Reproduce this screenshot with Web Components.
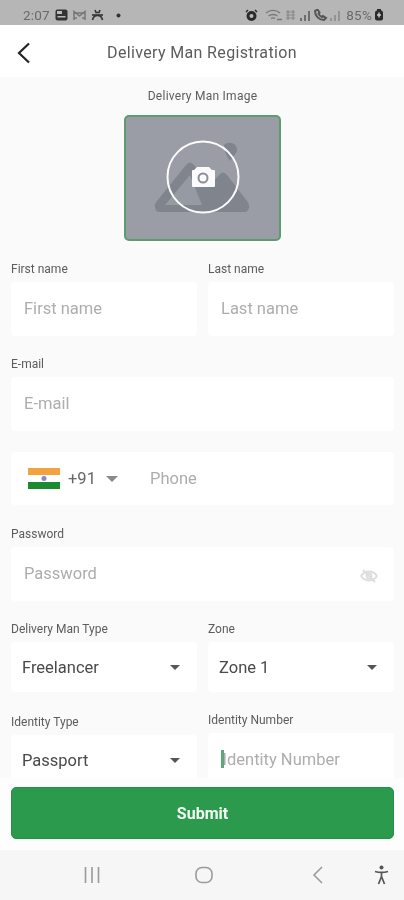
<!DOCTYPE html>
<html>
<head>
<meta charset="utf-8">
<title>Delivery Man Registration</title>
<style>
html, body { margin: 0; height: 900px; overflow: hidden; background: #fafafa; }
body { font-family: Roboto, "Liberation Sans", sans-serif; }
</style>
</head>
<body>
<reg-page>
  <status-bar></status-bar>
  <app-bar>Delivery Man Registration</app-bar>
  <reg-form>
    <photo-picker>Delivery Man Image</photo-picker>
    <form-row style="margin-top:21px">
      <form-field label="First name" hint="First name"></form-field>
      <form-field label="Last name" hint="Last name"></form-field>
    </form-row>
    <form-field label="E-mail" hint="E-mail" style="margin-top:21px"></form-field>
    <phone-field style="margin-top:21px"></phone-field>
    <form-field label="Password" hint="Password" eye style="margin-top:22px"></form-field>
    <form-row style="margin-top:21px">
      <form-field label="Delivery Man Type" value="Freelancer" select></form-field>
      <form-field label="Zone" value="Zone 1" select></form-field>
    </form-row>
    <form-row style="margin-top:21px">
      <form-field label="Identity Type" value="Passport" select style="margin-top:2px"></form-field>
      <form-field label="Identity Number" hint="Identity Number" caret></form-field>
    </form-row>
  </reg-form>
  <submit-bar>Submit</submit-bar>
  <nav-bar></nav-bar>
</reg-page>
<script>
class RegPage extends HTMLElement {
  constructor() {
    super()
    this.attachShadow({ mode: 'open' }).innerHTML = `
      <style>
      :host { display: flex; flex-direction: column; height: 900px; width: 404px; filter: blur(.6px); }
      </style>
      <slot></slot>`
  }
}

class StatusBar extends HTMLElement {
  constructor() {
    super()
    this.attachShadow({ mode: 'open' }).innerHTML = `
      <style>
      :host { display: flex; align-items: center; height: 25px; flex: none; padding: 5px 20px 0 23px; box-sizing: border-box;
        background: #b6b6b6; color: #6a6a6a; font-size: 13.500px; letter-spacing: .2px; }
      .left, .right { display: flex; align-items: center; }
      .left { gap: 5px; }
      .right { margin-left: auto; gap: 2px; }
      svg { display: block; }
      .pct { margin-left: 3px; }
      </style>
      <div class="left">
        <span>2:07</span>
        <svg width="13" height="12" viewBox="0 0 13 12"><rect x=".5" y=".5" width="12" height="11" rx="2" fill="#333"/><rect x="2" y="2" width="5" height="3" fill="#bbb"/><rect x="2.500" y="7" width="8" height="1.500" fill="#bbb"/></svg>
        <svg width="13" height="11" viewBox="0 0 13 11" fill="none" stroke="#777" stroke-width="1.500"><path d="M1 10V1.500L6.500 6 12 1.500V10"/><path d="M1 3h11M1 8h3M9 8h3"/></svg>
        <svg width="13" height="12" viewBox="0 0 13 12" fill="none" stroke="#333" stroke-width="1.600"><path d="M4 1l1 2.500h3L9 1"/><path d="M1 6h11"/><path d="M1.500 11c.5-3 2.500-4.500 5-4.500s4.500 1.500 5 4.500"/></svg>
        <svg width="5" height="5" viewBox="0 0 5 5" style="margin-left:7px"><circle cx="2.500" cy="2.500" r="2" fill="#333"/></svg>
      </div>
      <div class="right">
        <svg width="13" height="13" viewBox="0 0 13 13" style="margin-right:5px"><circle cx="6.500" cy="7" r="5" fill="#2b2b2b"/><path d="M1 3l2-2M12 3l-2-2" stroke="#2b2b2b" stroke-width="1.500"/><circle cx="6.500" cy="7" r="2" fill="#bbb"/></svg>
        <svg width="18" height="13" viewBox="0 0 18 13" fill="none" stroke="#777" stroke-width="1.300"><path d="M1 4c4-3.500 10-3.500 14 0M3.500 7c2.500-2 6.500-2 9 0M6 9.500c1.500-1 2.500-1 4 0"/><path d="M12 10.500h5" stroke-width="1.500"/></svg>
        <svg width="26" height="13" viewBox="0 0 26 13" fill="none" stroke="#888" stroke-width="1.200"><path d="M1 3h9M1 6h9M1 9h9M3 1v10M8 1v10"/><path d="M16 12V9M20 12V6M24 12V2" stroke="#666" stroke-width="1.800"/></svg>
        <svg width="15" height="13" viewBox="0 0 15 13" fill="none" stroke="#555" stroke-width="2"><path d="M2 2c0 5 4 9 9 9l2-2-3-2-1 1c-1.500-.5-3-2-3.500-3.500l1-1-2-3z"/></svg>
        <svg width="11" height="13" viewBox="0 0 11 13" fill="none" stroke="#888" stroke-width="1.500"><path d="M1 12V9M5 12V6M9 12V2"/></svg>
        <span class="pct">85%</span>
        <svg width="10" height="12" viewBox="0 0 10 12"><rect x="1" y="1.500" width="8" height="10" rx="2" fill="#2b2b2b"/><rect x="3" y="0" width="4" height="2" fill="#2b2b2b"/><path d="M5 3.500v5M3 6h4" stroke="#ccc" stroke-width="1.400"/></svg>
      </div>`
  }
}

class AppBar extends HTMLElement {
  constructor() {
    super()
    this.attachShadow({ mode: 'open' }).innerHTML = `
      <style>
      :host { display: flex; align-items: center; justify-content: center; position: relative; height: 52px; padding-top: 2px; box-sizing: border-box; flex: none;
        background: #fff; color: #5c5c5c; font-size: 16px; letter-spacing: .35px; }
      svg { position: absolute; left: 16px; top: 17px; }
      </style>
      <svg width="15" height="22" viewBox="0 0 15 22" fill="none" stroke="#222" stroke-width="2.200"><path d="M13 1.500L3 11l10 9.500"/></svg>
      <span><slot></slot></span>`
  }
}

class RegForm extends HTMLElement {
  constructor() {
    super()
    this.attachShadow({ mode: 'open' }).innerHTML = `
      <style>
      :host { display: flex; flex-direction: column; flex: 1; min-height: 0; overflow: hidden; padding: 0 10px 0 11px; background: #fafafa; }
      </style>
      <slot></slot>`
  }
}

class PhotoPicker extends HTMLElement {
  constructor() {
    super()
    this.attachShadow({ mode: 'open' }).innerHTML = `
      <style>
      :host { display: flex; flex-direction: column; align-items: center; flex: none; padding-top: 12px; }
      .label { font-size: 12px; line-height: 14px; color: #5c5c5c; letter-spacing: .25px; margin-bottom: 12px; }
      .box { position: relative; width: 157px; height: 126px; box-sizing: border-box; border: 2px solid #5c9c70; border-radius: 5px; background: #9a9da5; }
      svg { position: absolute; left: -2px; top: -2px; }
      </style>
      <div class="label"><slot></slot></div>
      <div class="box">
        <svg width="157" height="126" viewBox="0 0 157 126">
          <path d="M31 92 Q30 89 33 86 L62 50 Q66 45 70 50 L86 70 L95 60 Q99 55 103 60 L123 86 Q128 93 122 97 L36 97 Q31 97 31 92z" fill="#80848d"/>
          <path d="M41 90 L66 60 L78 90z" fill="#969aa2"/>
          <path d="M100 30 Q104 26 110 29 Q115 33 112 38 L106 46 Q100 38 100 30z" fill="#80848d"/>
          <circle cx="79" cy="62" r="35.500" fill="none" stroke="#fbfbfb" stroke-width="2"/>
          <path d="M70 55 L73 52 H85 L88 55 H90 Q91 55 91 56 V71 Q91 72 90 72 H69 Q68 72 68 71 V56 Q68 55 69 55z" fill="#fbfbfb"/>
          <circle cx="79" cy="63" r="5.500" fill="#8b8e96"/>
          <circle cx="79" cy="63" r="3.500" fill="#fbfbfb"/>
        </svg>
      </div>`
  }
}

class FormRow extends HTMLElement {
  constructor() {
    super()
    this.attachShadow({ mode: 'open' }).innerHTML = `
      <style>
      :host { display: grid; grid-template-columns: 186px 186px; gap: 11px; flex: none; }
      </style>
      <slot></slot>`
  }
}

class FormField extends HTMLElement {
  constructor() {
    super()
    const isSelect = this.hasAttribute('select')
    const text = isSelect ? this.getAttribute('value') : this.getAttribute('hint')
    this.attachShadow({ mode: 'open' }).innerHTML = `
      <style>
      :host { display: block; flex: none; }
      .label { font-size: 12px; line-height: 14px; color: #5c5c5c; margin-bottom: 6px; }
      .box { display: flex; align-items: center; background: #fff; border-radius: 4px; height: ${isSelect ? 50 : 54}px; padding: 0 13px 2px; box-sizing: border-box; font-size: 16.500px; color: #adadad; }
      .box.sel { color: #4a4a4a; padding: 0 17px 0 11px; justify-content: space-between; }
      .box.eye { justify-content: space-between; }
      .caret { width: 2.500px; height: 18px; background: #5fa67a; margin-right: -1px; }
      .arrow { width: 0; height: 0; border: 5.500px solid transparent; border-top: 5.500px solid #555; border-bottom: 0; }
      svg { display: block; margin-right: 3px; margin-top: 5px; }
      </style>
      <div class="label">${this.getAttribute('label')}</div>
      <div class="box ${isSelect ? 'sel' : ''} ${this.hasAttribute('eye') ? 'eye' : ''}">
        ${this.hasAttribute('caret') ? '<i class="caret"></i>' : ''}
        <span>${text}</span>
        ${isSelect ? '<i class="arrow"></i>' : ''}
        ${this.hasAttribute('eye') ? `<svg width="18" height="16" viewBox="0 0 18 16" fill="none" stroke="#ddd" stroke-width="1.800"><path d="M1 8c4-6 12-6 16 0-4 6-12 6-16 0z"/><circle cx="9" cy="8" r="2.500"/><path d="M3 2l12 12"/></svg>` : ''}
      </div>`
  }
}

class PhoneField extends HTMLElement {
  constructor() {
    super()
    this.attachShadow({ mode: 'open' }).innerHTML = `
      <style>
      :host { display: flex; align-items: center; flex: none; height: 53px; background: #fff; border-radius: 4px; font-size: 16.500px; }
      .code { display: flex; align-items: center; height: 100%; width: 117px; flex: none; padding-left: 17px; box-sizing: border-box; }
      .num { color: #666; margin-left: 8px; margin-right: 10px; }
      .arrow { width: 0; height: 0; border: 6px solid transparent; border-top: 6px solid #8a8a8a; border-bottom: 0; }
      .hint { color: #adadad; margin-left: 22px; }
      svg { display: block; }
      </style>
      <div class="code">
        <svg width="32" height="21" viewBox="0 0 32 21"><rect width="32" height="7" fill="#f4a13f"/><rect y="7" width="32" height="7" fill="#fff"/><rect y="14" width="32" height="7" fill="#1c8a30"/><circle cx="16" cy="10.500" r="2.500" fill="#8a86c8"/></svg>
        <span class="num">+91</span>
        <i class="arrow"></i>
      </div>
      <span class="hint">Phone</span>`
  }
}

class SubmitBar extends HTMLElement {
  constructor() {
    super()
    this.attachShadow({ mode: 'open' }).innerHTML = `
      <style>
      :host { display: block; flex: none; height: 72px; padding: 9px 10px 0 11px; box-sizing: border-box; background: #fdfdfd; }
      div { display: flex; align-items: center; justify-content: center; height: 52px; box-sizing: border-box; border: 1px solid #1f9444; border-radius: 5px;
        background: #2b9a4c; color: #f4fbf6; font-size: 16px; font-weight: 700; }
      </style>
      <div><slot></slot></div>`
  }
}

class NavBar extends HTMLElement {
  constructor() {
    super()
    this.attachShadow({ mode: 'open' }).innerHTML = `
      <style>
      :host { display: flex; align-items: center; flex: none; height: 50px; padding-left: 84px; box-sizing: border-box; background: #f6f6f6; }
      svg { display: block; flex: none; }
      </style>
      <svg width="16" height="16" viewBox="0 0 16 16" fill="none" stroke="#9a9a9a" stroke-width="1.600"><path d="M1.500 0v16M8 0v16M14.500 0v16"/></svg>
      <svg width="18" height="18" viewBox="0 0 18 18" fill="none" stroke="#9a9a9a" stroke-width="1.600" style="margin-left:95px"><rect x="1" y="1.500" width="16" height="15" rx="6"/></svg>
      <svg width="11" height="18" viewBox="0 0 11 18" fill="none" stroke="#9a9a9a" stroke-width="1.600" style="margin-left:99px"><path d="M10 1L2 9l8 8"/></svg>
      <svg width="15" height="20" viewBox="0 0 15 20" fill="none" stroke="#555" stroke-width="1.700" style="margin-left:51px"><circle cx="7.500" cy="2.500" r="2" fill="#555" stroke="none"/><path d="M1 6.500c4 1.200 9 1.200 13 0M7.500 7.500V12M7.500 11.500L4.500 19M7.500 11.500l3 7.500"/></svg>`
  }
}

customElements.define('reg-page', RegPage)
customElements.define('status-bar', StatusBar)
customElements.define('app-bar', AppBar)
customElements.define('reg-form', RegForm)
customElements.define('photo-picker', PhotoPicker)
customElements.define('form-row', FormRow)
customElements.define('form-field', FormField)
customElements.define('phone-field', PhoneField)
customElements.define('submit-bar', SubmitBar)
customElements.define('nav-bar', NavBar)
</script>
</body>
</html>
